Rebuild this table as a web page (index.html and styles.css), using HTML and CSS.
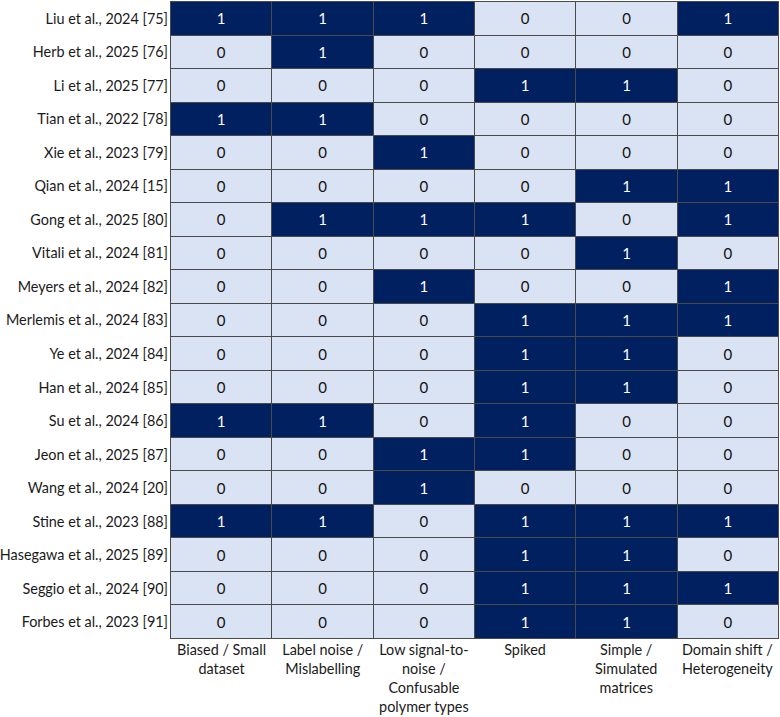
FILE: index.html
```html
<!DOCTYPE html>
<html>
<head>
<meta charset="utf-8">
<link rel="stylesheet" href="styles.css">
</head>
<body>
<div class="chart">
  <div class="labels">
    <div class="label">Liu et al., 2024 [75]</div>
    <div class="label">Herb et al., 2025 [76]</div>
    <div class="label">Li et al., 2025 [77]</div>
    <div class="label">Tian et al., 2022 [78]</div>
    <div class="label">Xie et al., 2023 [79]</div>
    <div class="label">Qian et al., 2024 [15]</div>
    <div class="label">Gong et al., 2025 [80]</div>
    <div class="label">Vitali et al., 2024 [81]</div>
    <div class="label">Meyers et al., 2024 [82]</div>
    <div class="label">Merlemis et al., 2024 [83]</div>
    <div class="label">Ye et al., 2024 [84]</div>
    <div class="label">Han et al., 2024 [85]</div>
    <div class="label">Su et al., 2024 [86]</div>
    <div class="label">Jeon et al., 2025 [87]</div>
    <div class="label">Wang et al., 2024 [20]</div>
    <div class="label">Stine et al., 2023 [88]</div>
    <div class="label">Hasegawa et al., 2025 [89]</div>
    <div class="label">Seggio et al., 2024 [90]</div>
    <div class="label">Forbes et al., 2023 [91]</div>
  </div>
  <div class="matrix">
    <div class="c on">1</div><div class="c on">1</div><div class="c on">1</div><div class="c">0</div><div class="c">0</div><div class="c on">1</div>
    <div class="c">0</div><div class="c on">1</div><div class="c">0</div><div class="c">0</div><div class="c">0</div><div class="c">0</div>
    <div class="c">0</div><div class="c">0</div><div class="c">0</div><div class="c on">1</div><div class="c on">1</div><div class="c">0</div>
    <div class="c on">1</div><div class="c on">1</div><div class="c">0</div><div class="c">0</div><div class="c">0</div><div class="c">0</div>
    <div class="c">0</div><div class="c">0</div><div class="c on">1</div><div class="c">0</div><div class="c">0</div><div class="c">0</div>
    <div class="c">0</div><div class="c">0</div><div class="c">0</div><div class="c">0</div><div class="c on">1</div><div class="c on">1</div>
    <div class="c">0</div><div class="c on">1</div><div class="c on">1</div><div class="c on">1</div><div class="c">0</div><div class="c on">1</div>
    <div class="c">0</div><div class="c">0</div><div class="c">0</div><div class="c">0</div><div class="c on">1</div><div class="c">0</div>
    <div class="c">0</div><div class="c">0</div><div class="c on">1</div><div class="c">0</div><div class="c">0</div><div class="c on">1</div>
    <div class="c">0</div><div class="c">0</div><div class="c">0</div><div class="c on">1</div><div class="c on">1</div><div class="c on">1</div>
    <div class="c">0</div><div class="c">0</div><div class="c">0</div><div class="c on">1</div><div class="c on">1</div><div class="c">0</div>
    <div class="c">0</div><div class="c">0</div><div class="c">0</div><div class="c on">1</div><div class="c on">1</div><div class="c">0</div>
    <div class="c on">1</div><div class="c on">1</div><div class="c">0</div><div class="c on">1</div><div class="c">0</div><div class="c">0</div>
    <div class="c">0</div><div class="c">0</div><div class="c on">1</div><div class="c on">1</div><div class="c">0</div><div class="c">0</div>
    <div class="c">0</div><div class="c">0</div><div class="c on">1</div><div class="c">0</div><div class="c">0</div><div class="c">0</div>
    <div class="c on">1</div><div class="c on">1</div><div class="c">0</div><div class="c on">1</div><div class="c on">1</div><div class="c on">1</div>
    <div class="c">0</div><div class="c">0</div><div class="c">0</div><div class="c on">1</div><div class="c on">1</div><div class="c">0</div>
    <div class="c">0</div><div class="c">0</div><div class="c">0</div><div class="c on">1</div><div class="c on">1</div><div class="c on">1</div>
    <div class="c">0</div><div class="c">0</div><div class="c">0</div><div class="c on">1</div><div class="c on">1</div><div class="c">0</div>
  </div>
  <div class="spacer"></div>
  <div class="headers">
    <div class="h">Biased / Small<br>dataset</div>
    <div class="h">Label noise /<br>Mislabelling</div>
    <div class="h">Low signal-to-<br>noise /<br>Confusable<br>polymer types</div>
    <div class="h">Spiked</div>
    <div class="h">Simple /<br>Simulated<br>matrices</div>
    <div class="h">Domain shift /<br>Heterogeneity</div>
  </div>
</div>
</body>
</html>
```

FILE: styles.css
```css
html, body {
  margin: 0;
  padding: 0;
  background: #ffffff;
}
body {
  font-family: Lato, "Open Sans", sans-serif;
  font-size: 14.4px;
  color: #1a1a1a;
}
.chart {
  display: grid;
  grid-template-columns: 170px 609px;
  grid-template-rows: 638px auto;
  padding-top: 1px;
}
.labels {
  display: grid;
  grid-template-columns: minmax(0, 1fr);
  grid-template-rows: repeat(19, 1fr);
  padding: 1px 0;
  row-gap: 1px;
}
.label {
  display: flex;
  align-items: center;
  justify-content: flex-end;
  padding-right: 2px;
  white-space: nowrap;
}
.matrix {
  display: grid;
  grid-template-columns: repeat(6, 1fr);
  grid-template-rows: repeat(19, 1fr);
  gap: 1px;
  padding: 1px;
  background: #4a4a4a;
}
.c {
  background: #dae3f3;
  display: flex;
  align-items: center;
  justify-content: center;
  color: #111111;
  font-size: 15px;
}
.c.on {
  background: #002060;
  color: #ffffff;
}
.headers {
  display: grid;
  grid-template-columns: repeat(6, 1fr);
  padding: 1px 1px 0;
}
.h {
  text-align: center;
  line-height: 19px;
}
```
